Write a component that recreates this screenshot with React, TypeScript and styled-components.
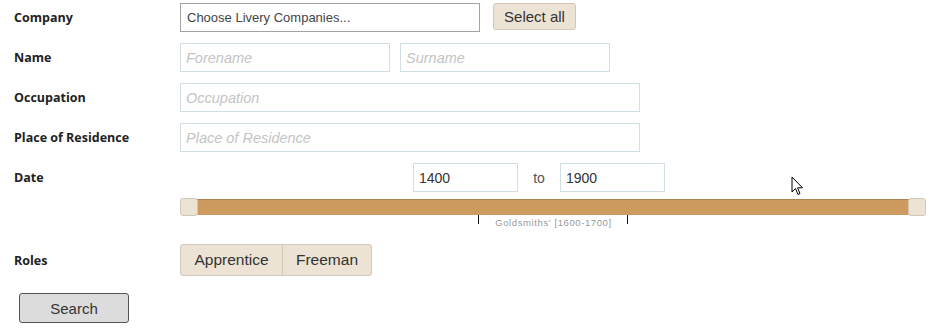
import styled, { createGlobalStyle } from 'styled-components';

const Global = createGlobalStyle`
    body {
        margin: 0;
        background: #fff;
        font-family: Arial, 'Liberation Sans', sans-serif;
    }
`;

const Page = styled.div`
    position: relative;
    width: 937px;
    height: 329px;
    padding: 3px 0 0 14px;
    box-sizing: border-box;
`;
const Row = styled.div<{ $h?: number; $mt?: number }>`
    display: flex;
    align-items: center;
    height: ${p => p.$h ?? 29}px;
    margin-top: ${p => p.$mt ?? 0}px;
    margin-bottom: 11px;
`;
const Label = styled.div`
    width: 166px;
    flex: none;
    font-family: 'Open Sans', sans-serif;
    font-size: 12.5px;
    font-weight: 700;
    color: #222;
`;
const Controls = styled.div<{ $indent?: number }>`
    display: flex;
    align-items: center;
    gap: 10px;
    height: 100%;
    padding-left: ${p => p.$indent ?? 0}px;
`;
const Input = styled.input<{ $w: number }>`
    box-sizing: border-box;
    width: ${p => p.$w}px;
    height: 29px;
    padding: 0 5px;
    border: 1px solid #cfdfe3;
    font-family: Arial, 'Liberation Sans', sans-serif;
    font-size: 14px;
    color: #333;
    outline: none;
    &::placeholder {
        color: #c4c4c4;
        font-style: italic;
        font-size: 14.5px;
    }
`;
const Select = styled.div`
    box-sizing: border-box;
    width: 300px;
    height: 29px;
    padding: 0 6px;
    display: flex;
    align-items: center;
    border: 1px solid #a3a3a3;
    font-size: 13px;
    color: #444;
`;
const SelectAll = styled.button`
    box-sizing: border-box;
    width: 83px;
    height: 27px;
    margin: 0 0 3px 3px;
    background: #ede3d4;
    border: 1px solid #d3c8b8;
    border-radius: 3px;
    font-family: Arial, 'Liberation Sans', sans-serif;
    font-size: 15px;
    color: #333;
    padding: 0;
`;
const To = styled.span`
    width: 22px;
    text-align: center;
    font-size: 14px;
    color: #555;
`;
const SliderWrap = styled.div`
    position: relative;
    margin: -5px 0 0 166px;
    width: 746px;
    height: 34px;
`;
const Track = styled.div`
    position: absolute;
    left: 9px;
    right: 9px;
    top: 1px;
    height: 16px;
    box-sizing: border-box;
    background: #cd9b5d;
    border-top: 1px solid #b08250;
`;
const Handle = styled.div<{ $left?: boolean }>`
    position: absolute;
    top: 0;
    ${p => (p.$left ? 'left: 0;' : 'right: 0;')}
    width: 18px;
    height: 18px;
    box-sizing: border-box;
    background: #ede3d4;
    border: 1px solid #d2c7b8;
    border-radius: 3px;
`;
const Tick = styled.div`
    position: absolute;
    top: 17px;
    width: 1px;
    height: 9px;
    background: #111;
`;
const TickLabel = styled.div`
    position: absolute;
    top: 19px;
    left: 299px;
    width: 149px;
    text-align: center;
    font-size: 9.5px;
    letter-spacing: 0.6px;
    color: #999;
`;
const Group = styled.div`
    display: flex;
    height: 32px;
    box-sizing: border-box;
    border: 1px solid #d3c8b8;
    border-radius: 3px;
    background: #ede3d4;
    overflow: hidden;
`;
const Toggle = styled.button<{ $w: number }>`
    width: ${p => p.$w}px;
    height: 100%;
    background: transparent;
    border: none;
    padding: 0;
    font-family: Arial, 'Liberation Sans', sans-serif;
    font-size: 15.5px;
    color: #333;
    & + & {
        border-left: 1px solid #d3c8b8;
    }
`;
const Search = styled.button`
    display: block;
    box-sizing: border-box;
    margin: 17px 0 0 5px;
    width: 110px;
    height: 30px;
    background: #dcdcdc;
    border: 1px solid #555;
    border-radius: 3px;
    font-family: Arial, 'Liberation Sans', sans-serif;
    font-size: 15px;
    color: #333;
    padding: 0;
`;
const Cursor = styled.svg`
    position: absolute;
    left: 791px;
    top: 176px;
`;

export default function App() {
    return (
        <Page>
            <Global />
            <Row>
                <Label>Company</Label>
                <Controls>
                    <Select>Choose Livery Companies...</Select>
                    <SelectAll>Select all</SelectAll>
                </Controls>
            </Row>
            <Row>
                <Label>Name</Label>
                <Controls>
                    <Input $w={210} placeholder="Forename" />
                    <Input $w={210} placeholder="Surname" />
                </Controls>
            </Row>
            <Row>
                <Label>Occupation</Label>
                <Controls>
                    <Input $w={460} placeholder="Occupation" />
                </Controls>
            </Row>
            <Row>
                <Label>Place of Residence</Label>
                <Controls>
                    <Input $w={460} placeholder="Place of Residence" />
                </Controls>
            </Row>
            <Row>
                <Label>Date</Label>
                <Controls $indent={233}>
                    <Input $w={105} defaultValue="1400" />
                    <To>to</To>
                    <Input $w={105} defaultValue="1900" />
                </Controls>
            </Row>
            <SliderWrap>
                <Track />
                <Handle $left />
                <Handle />
                <Tick style={{ left: 298 }} />
                <Tick style={{ left: 447 }} />
                <TickLabel>Goldsmiths' [1600-1700]</TickLabel>
            </SliderWrap>
            <Row $h={32} $mt={12}>
                <Label>Roles</Label>
                <Group>
                    <Toggle $w={101}>Apprentice</Toggle>
                    <Toggle $w={89}>Freeman</Toggle>
                </Group>
            </Row>
            <Search>Search</Search>
            <Cursor width="13" height="21" viewBox="0 0 13 21">
                <path d="M1 1 L1 16 L4.5 12.5 L7 18.5 L9 17.6 L6.6 11.8 L11.5 11.8 Z" fill="#fff" stroke="#000" strokeWidth="1" strokeLinejoin="round" />
            </Cursor>
        </Page>
    );
}
